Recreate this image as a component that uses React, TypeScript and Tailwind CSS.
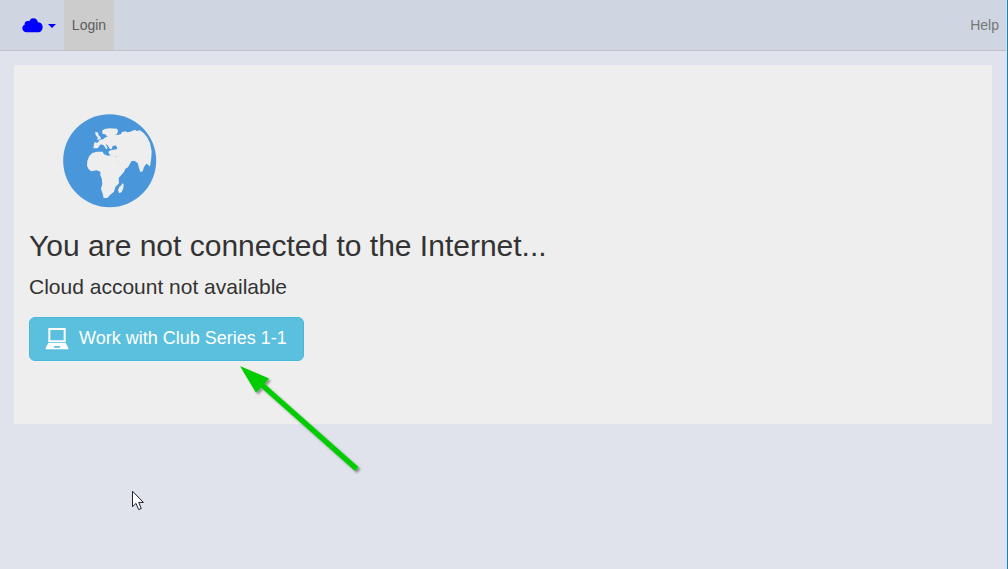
function Cloud() {
  return (
    <svg className="block h-[15px] w-[21px]" viewBox="0 0 63 45" fill="#0000ff">
      <path d="M14 43C6 43 1 37 1 31c0-6 3-10 7-11C7 12 12 8 18 9c2 0 3 0 4 1C24 4 28 1 34 1c8 0 13 5 14 12 8 0 14 6 14 14 0 9-6 16-14 16z" />
    </svg>
  );
}

function Globe() {
  return (
    <svg className="block h-[106px] w-[110px]" viewBox="0 0 330 318">
      <circle cx="164" cy="158" r="139.5" fill="#4a96da" />
      <g fill="#eeeeee" strokeLinejoin="round">
        <path d="M141 68L149 63L164 61L186 62L189 68L186 79L176 82L171 86L156 85L151 79L143 78Z" />
        <path d="M121 71L130 74L130 81L136 86L138 94L125 95L129 89L124 84L121 78Z" />
        <path d="M115 121L118 103L129 104L132 97L144 94L152 88L162 83L175 81L188 81L198 78L201 72L212 70L216 73L226 71L240 65L244 69L255 67L265 74L276 87L285 105L290 130L289 148L285 176L280 171L274 167L267 177L263 190L256 192L252 180L248 165L238 158L229 160L219 178L207 184L197 181L187 160L184 145L174 144L163 139L160 132L166 127L185 124L187 119L181 112L172 115L171 122L165 123L158 112L152 108L158 120L154 124L146 112L137 109L128 121Z" />
        <path d="M112 135L126 131L143 131L147 139L158 143L170 141L185 146L189 163L200 179L212 180L207 192L191 210L192 226L181 237L177 251L165 261L157 270L146 270L143 257L138 243L142 227L140 211L136 202L136 191L125 187L109 190L101 184L96 173L97 158L103 144Z" />
        <path d="M203 225L206 230L205 241L200 252L193 256L189 247L193 237L199 232Z" />
      </g>
    </svg>
  );
}

function Laptop() {
  return (
    <svg className="block h-[22px] w-[24px] shrink-0" viewBox="0 0 72 66" fill="#ffffff">
      <path fillRule="evenodd" d="M10 0h52v43H10zM16 6v31h40V6z" />
      <path fillRule="evenodd" d="M10 45h52l8 15v4H2v-4zM28 54l-2 5h20l-2-5z" />
    </svg>
  );
}

function Arrow() {
  return (
    <svg className="pointer-events-none absolute left-[230px] top-[355px] h-[125px] w-[140px]" viewBox="0 0 140 125">
      <defs>
        <filter id="shadow" x="-10%" y="-10%" width="130%" height="130%">
          <feDropShadow dx="2" dy="2" stdDeviation="1.2" floodColor="#000000" floodOpacity="0.4" />
        </filter>
      </defs>
      <path filter="url(#shadow)" fill="#00cc00" d="M10 11l29 12.5-4.5 5.3L128.5 112l-3.5 4L31 32.5l-5 5.2z" />
    </svg>
  );
}

function Pointer() {
  return (
    <svg className="pointer-events-none absolute left-[132px] top-[490px] h-[21px] w-[13px]" viewBox="0 0 13 21">
      <path d="M.5 1.2v15.5l3.5-3.3 2.7 6.2 2.6-1.1-2.6-6.1h4.7z" fill="white" stroke="#202028" strokeWidth="1" />
    </svg>
  );
}

export default function App() {
  return (
    <div className="relative flex h-[569px] w-[1008px] overflow-hidden bg-[#e0e3ec] font-['Liberation_Sans',Arial,sans-serif] text-[#333333]">
      <div className="flex min-w-0 flex-1 flex-col">
        <nav className="flex h-[51px] shrink-0 items-stretch border-b border-[#c0c2c8] bg-[#cfd6e2] text-[14px] leading-[20px]">
          <button className="flex w-16 items-center gap-[5px] pl-[22px]" aria-label="Cloud menu">
            <Cloud />
            <svg className="mt-px block h-1 w-2 shrink-0" viewBox="0 0 8 4">
              <path d="M0 0h8L4 4z" fill="#0000ff" />
            </svg>
          </button>
          <a className="flex w-[50px] items-center justify-center bg-[#cccccc] text-[#5c5c5c]">Login</a>
          <a className="ml-auto flex items-center pr-[7px] text-[#777777]">Help</a>
        </nav>
        <main className="ml-[14px] mr-[14px] mt-[14px] flex h-[359px] flex-col items-start bg-[#eeeeee] pl-[15px]">
          <div className="ml-[26px] mt-[43px]">
            <Globe />
          </div>
          <h1 className="mt-[15px] text-[30px] leading-[33px]">You are not connected to the Internet...</h1>
          <p className="mt-[13px] text-[21px] leading-[24px]">Cloud account not available</p>
          <button className="mt-[18px] flex h-[44px] w-[275px] items-center rounded-[6px] border border-[#46b8da] bg-[#5bc0de] pl-[15px] text-[18px] leading-[24px] text-white">
            <Laptop />
            <span className="mb-[2px] ml-[10px] whitespace-nowrap">Work with Club Series 1-1</span>
          </button>
        </main>
      </div>
      <div className="w-[2px] shrink-0 border-l border-r border-l-[#cfe5f5] border-r-[#2080b0]" />
      <Arrow />
      <Pointer />
    </div>
  );
}
